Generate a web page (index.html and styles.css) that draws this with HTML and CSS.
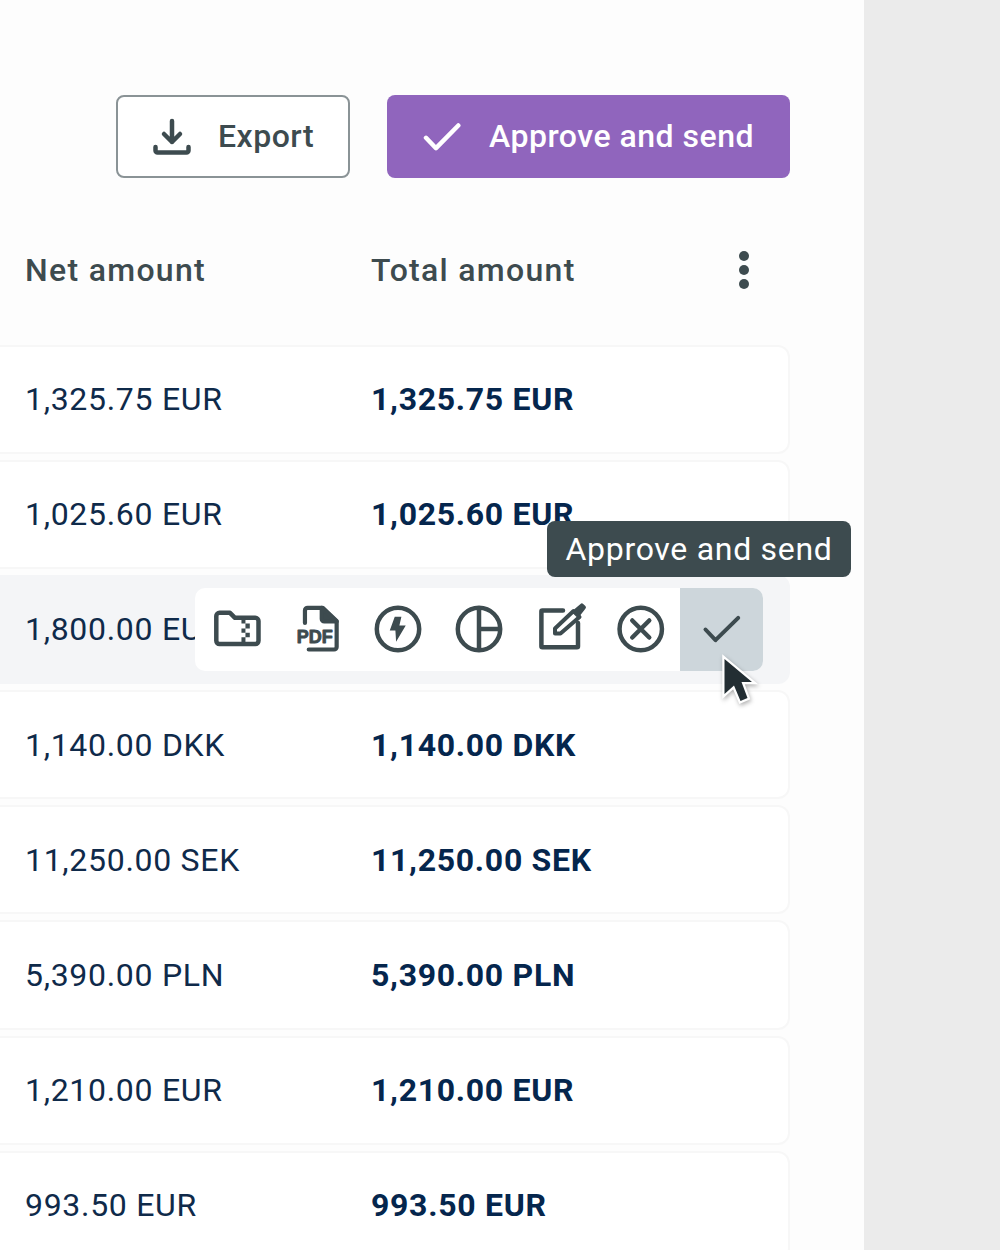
FILE: index.html
```html
<!DOCTYPE html>
<html lang="en">
<head>
<meta charset="utf-8">
<title>Invoices</title>
<link rel="stylesheet" href="styles.css">
</head>
<body>
<div class="page">
  <main class="panel">
    <div class="actions">
      <button class="btn btn-outline">
        <svg class="btn-icon" viewBox="0 0 40 40" fill="none" stroke="#3d4b4f" stroke-width="4.500" stroke-linecap="round" stroke-linejoin="round"><path d="M20 4v21M12 17l8 8 8-8"/><path d="M3.500 30v3.500a2 2 0 0 0 2 2h29a2 2 0 0 0 2-2V30"/></svg>
        <span>Export</span>
      </button>
      <button class="btn btn-primary">
        <svg class="btn-icon" viewBox="0 0 40 40" fill="none" stroke="#fff" stroke-width="4.500" stroke-linecap="round" stroke-linejoin="round"><path d="M3 20.800l10 10.400L35.300 8.500"/></svg>
        <span>Approve and send</span>
      </button>
    </div>
    <div class="head">
      <div class="col-net">Net amount</div>
      <div class="col-total">Total amount</div>
      <div class="dots"><i></i><i></i><i></i></div>
    </div>
    <div class="rows">
      <div class="row"><div class="col-net">1,325.75 EUR</div><div class="col-total strong">1,325.75 EUR</div></div>
      <div class="row"><div class="col-net">1,025.60 EUR</div><div class="col-total strong">1,025.60 EUR</div></div>
      <div class="row row-hover">
        <div class="col-net">1,800.00 EUR</div><div class="col-total strong">1,800.00 EUR</div>
        <div class="tooltip">Approve and send</div>
        <div class="tools">
          <span class="tool"><svg viewBox="0 0 48 48" fill="none" stroke="#3d4b4f" stroke-width="4.500" stroke-linejoin="round"><path d="M3.300 11a3.200 3.200 0 0 1 3.200-3.200H17l5 5h20.300a3.200 3.200 0 0 1 3.200 3.200v19.800a3.200 3.200 0 0 1-3.200 3.200H6.500a3.200 3.200 0 0 1-3.200-3.200z"/><path d="M28.450 12.500h4v6h-4zM32.450 18.500h4.350v5h-4.350zM28.450 23.500h4v4.300h-4zM32.450 27.800h4.350v4.400h-4.350zM28.450 32.200h4V39h-4z" fill="#3d4b4f" stroke="none"/></svg></span>
          <span class="tool"><svg viewBox="0 0 48 48" fill="none" stroke="#3d4b4f" stroke-width="4.200" stroke-linejoin="round" stroke-linecap="round"><g transform="translate(.75 0)"><path d="M10.200 18V5.500a2.700 2.700 0 0 1 2.700-2.700H28L41.900 16v26a2.500 2.500 0 0 1-2.500 2.500H14"/><path d="M27 3v11a2.500 2.500 0 0 0 2.500 2.500h12.400z" fill="#3d4b4f"/><text class="pdf" x="2" y="37.800">PDF</text></g></svg></span>
          <span class="tool"><svg viewBox="0 0 48 48" fill="none" stroke="#3d4b4f" stroke-width="4.500"><circle cx="24" cy="24" r="21.200"/><path d="M27.400 11.800h-6.650l-5 13.700h5.650l.7 11.300 9.650-16.300H25.400z" fill="#3d4b4f" stroke="none"/></svg></span>
          <span class="tool"><svg viewBox="0 0 48 48" fill="none" stroke="#3d4b4f" stroke-width="4.500"><circle cx="24" cy="24" r="21.200"/><path d="M24 3v42M24 24h21"/></svg></span>
          <span class="tool"><svg viewBox="0 0 48 48" fill="none" stroke="#3d4b4f" stroke-width="4.500" stroke-linejoin="round" stroke-linecap="round"><g transform="translate(1 0)"><path d="M27 5.500H6.400a1 1 0 0 0-1 1v34.700a1 1 0 0 0 1 1H41a1 1 0 0 0 1-1V18"/><path d="M19 28.500v-5L37.500 6l6 6-19 16.500z" fill="#fff" stroke-width="4"/><path d="M38 4.500l6.500-5.600a2 2 0 0 1 2.700 0l2.200 2.200a2 2 0 0 1 0 2.700l-5.700 7.200z" fill="#3d4b4f" stroke="none"/></g></svg></span>
          <span class="tool"><svg viewBox="0 0 48 48" fill="none" stroke="#3d4b4f" stroke-width="4.500" stroke-linecap="round"><g transform="translate(.75 0)"><circle cx="24" cy="24" r="21.200"/><path d="M15.500 15.500l17 17M32.500 15.500l-17 17"/></g></svg></span>
          <span class="tool tool-active"><svg viewBox="0 0 48 48" fill="none" stroke="#3d4b4f" stroke-width="4" stroke-linecap="round" stroke-linejoin="round"><path d="M7.500 24.500l10 10.700L40.200 12.800"/></svg></span>
        </div>
        <svg class="cursor" viewBox="0 0 42 62"><path d="M6.500 11v35l9.500-8.500 6.500 15.500 7-3-6-16h10.500z" fill="#232e33" stroke="#fff" stroke-width="4.500" stroke-linejoin="miter" paint-order="stroke"/></svg>
      </div>
      <div class="row"><div class="col-net">1,140.00 DKK</div><div class="col-total strong">1,140.00 DKK</div></div>
      <div class="row"><div class="col-net">11,250.00 SEK</div><div class="col-total strong">11,250.00 SEK</div></div>
      <div class="row"><div class="col-net">5,390.00 PLN</div><div class="col-total strong">5,390.00 PLN</div></div>
      <div class="row"><div class="col-net">1,210.00 EUR</div><div class="col-total strong">1,210.00 EUR</div></div>
      <div class="row"><div class="col-net">993.50 EUR</div><div class="col-total strong">993.50 EUR</div></div>
    </div>
  </main>
</div>
</body>
</html>
```

FILE: styles.css
```css
html, body { margin: 0; height: 100%; }
body { background: #ebebeb; font-family: Roboto, "Liberation Sans", sans-serif; overflow: hidden; }
.page { height: 1250px; overflow: hidden; }
.panel { width: 864px; height: 1250px; background: #fdfdfd; box-sizing: border-box; padding-top: 95px; overflow: hidden; }

.actions { display: flex; justify-content: flex-end; gap: 37px; padding-right: 74px; }
.btn { display: flex; align-items: center; height: 83px; box-sizing: border-box; border-radius: 8px; padding-bottom: 2px; font: 500 32px Roboto, sans-serif; letter-spacing: 0.500px; }
.btn-outline { width: 234px; padding-left: 34px; gap: 26px; background: #fff; border: 2px solid #8a9396; color: #3d4b4f; }
.btn-primary { width: 403px; padding-left: 36px; gap: 26px; background: #9065bd; border: 0; color: #fff; }
.btn-icon { width: 40px; height: 40px; flex: none; position: relative; top: 1px; }

.head { display: flex; align-items: center; height: 84px; margin-top: 50px; padding-left: 25px; font-size: 32px; font-weight: 500; color: #3d4b4f; letter-spacing: 1.300px; position: relative; }
.col-net { width: 346px; flex: none; }
.col-total { flex: none; }
.dots { position: absolute; left: 739px; top: 23px; display: flex; flex-direction: column; gap: 4px; }
.dots i { display: block; width: 10px; height: 10px; border-radius: 50%; background: #3d4b4f; }

.rows { display: flex; flex-direction: column; gap: 6px; margin-top: 32.500px; width: 810px; margin-left: -20px; }
.row { position: relative; display: flex; align-items: flex-start; height: 109.200px; flex: none; box-sizing: border-box; padding: 33.500px 0 0 43px; line-height: 38px; background: #fff; border: 2px solid #f7f7f7; border-radius: 12px; font-size: 32px; color: #0f2a4a; letter-spacing: 0.700px; }
.strong { font-weight: 700; color: #05264d; }
.row-hover { background: #f4f5f7; border-color: #f4f5f7; }

.tools { position: absolute; left: 213px; top: 11.100px; display: flex; width: 568px; height: 83px; box-sizing: border-box; padding-left: 2px; background: #fff; border-radius: 10px; overflow: hidden; }
.tool { flex: none; width: 80.500px; height: 83px; display: flex; align-items: center; justify-content: center; }
.tool svg { width: 48px; height: 48px; overflow: visible; }
.tool-active { background: #cdd6db; margin-left: auto; width: 83px; }
.pdf { font: 700 18px "Liberation Sans", sans-serif; fill: #3d4b4f; stroke: #3d4b4f; stroke-width: 0.900px; letter-spacing: 0; }

.tooltip { position: absolute; left: 565px; top: -55.900px; z-index: 2; width: 304px; height: 56px; box-sizing: border-box; padding-left: 18.500px; line-height: 56px; background: #3d4b4f; color: #fff; border-radius: 8px; font-weight: 400; letter-spacing: 0.700px; white-space: nowrap; }
.cursor { position: absolute; left: 736px; top: 71.100px; z-index: 3; width: 42px; height: 62px; filter: drop-shadow(1px 2px 2px rgba(0,0,0,.3)); }
```
